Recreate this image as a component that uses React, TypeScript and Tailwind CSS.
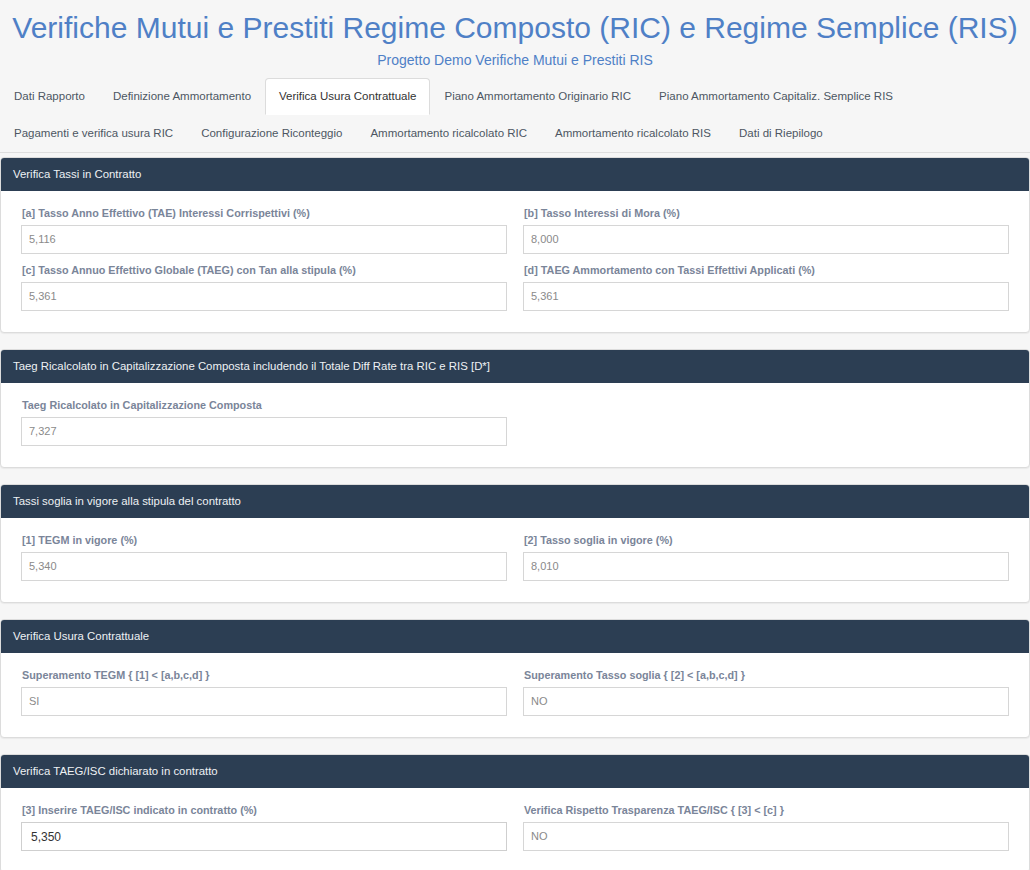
import React from "react";

const rows1 = [
  "Dati Rapporto",
  "Definizione Ammortamento",
  "Verifica Usura Contrattuale",
  "Piano Ammortamento Originario RIC",
  "Piano Ammortamento Capitaliz. Semplice RIS",
];
const rows2 = [
  "Pagamenti e verifica usura RIC",
  "Configurazione Riconteggio",
  "Ammortamento ricalcolato RIC",
  "Ammortamento ricalcolato RIS",
  "Dati di Riepilogo",
];

type FieldProps = { label: string; value: string; editable?: boolean };

function Field({ label, value, editable }: FieldProps) {
  return (
    <div className="flex flex-col">
      <div className="text-[10.8px] leading-[16px] font-bold text-[#7a8599] mb-[4px] pl-[1px]">{label}</div>
      <div
        className={
          editable
            ? "h-[29px] border border-[#cfcfcf] bg-white flex items-center pl-[9px] text-[12px] text-[#333]"
            : "h-[29px] border border-[#d6d6d6] bg-white flex items-center pl-[7px] text-[11px] text-[#8a8a8a]"
        }
      >
        {value}
      </div>
    </div>
  );
}

function Panel({ title, first, children }: { title: string; first?: boolean; children: React.ReactNode }) {
  return (
    <div
      className={
        (first ? "mt-[4px] " : "mt-[16px] ") +
        "border border-[#dcdcdc] rounded-[4px] bg-white shadow-[0_1px_1px_rgba(0,0,0,0.05)]"
      }
    >
      <div className="h-[33px] bg-[#2c3e53] rounded-t-[3px] flex items-center px-[12px] text-[11.4px] text-[#eef1f4]">
        {title}
      </div>
      <div className="px-[20px] pt-[14px] pb-[21px]">{children}</div>
    </div>
  );
}

export default function App() {
  const tabBase = "px-[13px] py-[9px] text-[11.5px] leading-[17px] border whitespace-nowrap";
  return (
    <div
      className="w-[1030px] min-h-[870px] bg-[#f6f6f6]"
      style={{ fontFamily: '"Liberation Sans", Arial, sans-serif' }}
    >
      <div className="pt-[10px] text-center">
        <div className="text-[30px] leading-[36px] text-[#4f80c6] whitespace-nowrap">
          Verifiche Mutui e Prestiti Regime Composto (RIC) e Regime Semplice (RIS)
        </div>
        <div className="mt-[4px] text-[14px] leading-[20px] text-[#4f80c6]">
          Progetto Demo Verifiche Mutui e Prestiti RIS
        </div>
      </div>
      <div className="mt-[8px] border-b border-[#dedede]">
        <div className="flex">
          {rows1.map((t, i) => (
            <div
              key={t}
              className={
                i === 2
                  ? tabBase + " text-[#333] bg-white border-[#dcdcdc] border-b-transparent rounded-t-[4px]"
                  : tabBase + " text-[#4d5663] border-transparent"
              }
            >
              {t}
            </div>
          ))}
        </div>
        <div className="flex">
          {rows2.map((t) => (
            <div key={t} className={tabBase + " text-[#4d5663] border-transparent"}>
              {t}
            </div>
          ))}
        </div>
      </div>
      <div className="flex flex-col">
        <Panel title="Verifica Tassi in Contratto" first>
          <div className="grid grid-cols-2 gap-x-[16px] gap-y-[8px]">
            <Field label="[a] Tasso Anno Effettivo (TAE) Interessi Corrispettivi (%)" value="5,116" />
            <Field label="[b] Tasso Interessi di Mora (%)" value="8,000" />
            <Field label="[c] Tasso Annuo Effettivo Globale (TAEG) con Tan alla stipula (%)" value="5,361" />
            <Field label="[d] TAEG Ammortamento con Tassi Effettivi Applicati (%)" value="5,361" />
          </div>
        </Panel>
        <Panel title="Taeg Ricalcolato in Capitalizzazione Composta includendo il Totale Diff Rate tra RIC e RIS [D*]">
          <div className="grid grid-cols-2 gap-x-[16px] gap-y-[8px]">
            <Field label="Taeg Ricalcolato in Capitalizzazione Composta" value="7,327" />
          </div>
        </Panel>
        <Panel title="Tassi soglia in vigore alla stipula del contratto">
          <div className="grid grid-cols-2 gap-x-[16px] gap-y-[8px]">
            <Field label="[1] TEGM in vigore (%)" value="5,340" />
            <Field label="[2] Tasso soglia in vigore (%)" value="8,010" />
          </div>
        </Panel>
        <Panel title="Verifica Usura Contrattuale">
          <div className="grid grid-cols-2 gap-x-[16px] gap-y-[8px]">
            <Field label="Superamento TEGM { [1] < [a,b,c,d] }" value="SI" />
            <Field label="Superamento Tasso soglia { [2] < [a,b,c,d] }" value="NO" />
          </div>
        </Panel>
        <Panel title="Verifica TAEG/ISC dichiarato in contratto">
          <div className="grid grid-cols-2 gap-x-[16px] gap-y-[8px]">
            <Field label="[3] Inserire TAEG/ISC indicato in contratto (%)" value="5,350" editable />
            <Field label="Verifica Rispetto Trasparenza TAEG/ISC { [3] < [c] }" value="NO" />
          </div>
        </Panel>
      </div>
    </div>
  );
}
